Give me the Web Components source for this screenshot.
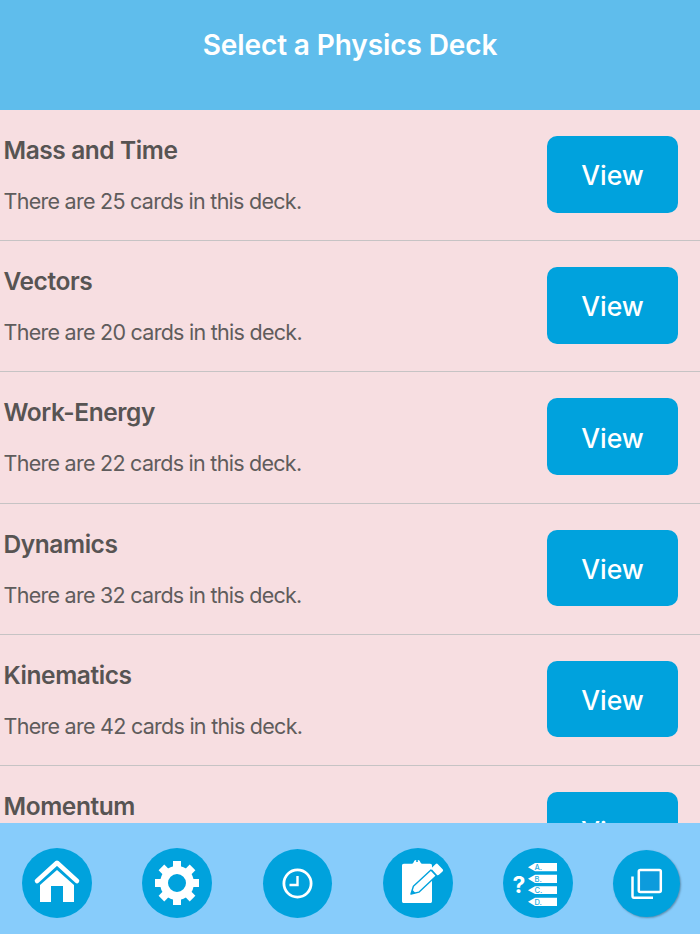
<!DOCTYPE html>
<html lang="en">
<head>
<meta charset="utf-8">
<title>Select a Physics Deck</title>
<style>
    html, body {
        margin: 0;
        height: 100%;
        font-family: Inter, "Liberation Sans", sans-serif;
    }
</style>
</head>
<body>
<deck-app>
    <app-header slot="header">Select a Physics Deck</app-header>
    <deck-row name="Mass and Time" count="25"></deck-row>
    <deck-row name="Vectors" count="20"></deck-row>
    <deck-row name="Work-Energy" count="22"></deck-row>
    <deck-row name="Dynamics" count="32"></deck-row>
    <deck-row name="Kinematics" count="42"></deck-row>
    <deck-row name="Momentum" count="18"></deck-row>
    <nav-bar slot="footer">
        <nav-button label="Home">
            <svg viewBox="0 0 70 70" width="70" height="70">
                <path d="M15 33 35 14.800 55 33" fill="none" stroke="#fff" stroke-width="4.600" stroke-linecap="round" stroke-linejoin="round"/>
                <path d="M18 37 35 22 52 37V54H41V38H29V54H18Z" fill="#fff"/>
            </svg>
        </nav-button>
        <nav-button label="Settings">
            <svg viewBox="0 0 70 70" width="70" height="70">
                <circle cx="35" cy="35" r="13" fill="none" stroke="#fff" stroke-width="8"/>
                <g fill="#fff">
                    <rect x="31" y="13" width="8" height="8"/>
                    <rect x="31" y="13" width="8" height="8" transform="rotate(45 35 35)"/>
                    <rect x="31" y="13" width="8" height="8" transform="rotate(90 35 35)"/>
                    <rect x="31" y="13" width="8" height="8" transform="rotate(135 35 35)"/>
                    <rect x="31" y="13" width="8" height="8" transform="rotate(180 35 35)"/>
                    <rect x="31" y="13" width="8" height="8" transform="rotate(225 35 35)"/>
                    <rect x="31" y="13" width="8" height="8" transform="rotate(270 35 35)"/>
                    <rect x="31" y="13" width="8" height="8" transform="rotate(315 35 35)"/>
                </g>
            </svg>
        </nav-button>
        <nav-button label="History" size="69">
            <svg viewBox="0 0 69 69" width="69" height="69">
                <circle cx="34.500" cy="34.500" r="13.600" fill="none" stroke="#fff" stroke-width="2.800"/>
                <path d="M34.500 27V36H26.500" fill="none" stroke="#fff" stroke-width="2.400"/>
            </svg>
        </nav-button>
        <nav-button label="Notes">
            <svg viewBox="0 0 70 70" width="70" height="70">
                <path d="M21 15.700H29C30 15.700 30.500 14.500 31 13.500 31.500 11.600 36.500 11.600 37 13.500 37.500 14.500 38 15.700 39 15.700H47C48.500 15.700 49 16.500 49 18V53C49 54.500 48.500 55 47 55H21C19.500 55 19 54.500 19 53V18C19 16.500 19.500 15.700 21 15.700Z" fill="#fff"/>
                <circle cx="34" cy="13" r="1.100" fill="#00a2dd"/>
                <g transform="translate(28 46) rotate(-43)">
                    <path d="M0 0 7 -4H31V4H7Z" fill="#fff" stroke="#00a2dd" stroke-width="1.400" stroke-linejoin="round"/>
                    <path d="M0 0 4 -2.200V2.200Z" fill="#00a2dd"/>
                    <rect x="32" y="-5" width="8" height="10" rx="1.500" fill="#fff"/>
                </g>
            </svg>
        </nav-button>
        <nav-button label="Quiz">
            <svg viewBox="0 0 70 70" width="70" height="70" font-family="Inter, 'Liberation Sans', sans-serif">
                <text x="16" y="45" font-size="23" font-weight="700" fill="#fff" text-anchor="middle">?</text>
                <g fill="#fff">
                    <path d="M25 19.200 32 15H54V23.300H32Z"/>
                    <path d="M25 30.800 32 26.700H54V35H32Z"/>
                    <path d="M25 42.200 32 38.300H54V46H32Z"/>
                    <path d="M25 53.800 32 49.700H54V58H32Z"/>
                </g>
                <g fill="#25ade2" font-size="7.500" font-weight="500">
                    <text x="31.500" y="22.300">A.</text>
                    <text x="31.500" y="33.900">B.</text>
                    <text x="31.500" y="45.300">C.</text>
                    <text x="31.500" y="56.900">D.</text>
                </g>
            </svg>
        </nav-button>
        <nav-button label="Decks" size="67" shadow>
            <svg viewBox="0 0 67 67" width="67" height="67">
                <rect x="25.800" y="20" width="22" height="22" rx="1.500" fill="#0d9bdc" stroke="#fff" stroke-width="2.500"/>
                <path d="M19.500 26.500V46C19.500 47 20 47.800 21 47.800H40" fill="none" stroke="#fff" stroke-width="2.500"/>
            </svg>
        </nav-button>
    </nav-bar>
</deck-app>

<script>
class DeckApp extends HTMLElement {
    constructor() {
        super();
        this.attachShadow({ mode: "open" }).innerHTML = `
        <style>
            :host {
                display: flex;
                flex-direction: column;
                height: 100vh;
                overflow: hidden;
                background: #f7dee1;
            }
            .list {
                flex: 1;
                min-height: 0;
                overflow: hidden;
            }
        </style>
        <slot name="header"></slot>
        <div class="list"><slot></slot></div>
        <slot name="footer"></slot>
        `;
    }
}

class AppHeader extends HTMLElement {
    constructor() {
        super();
        this.attachShadow({ mode: "open" }).innerHTML = `
        <style>
            :host {
                display: block;
                height: 110px;
                padding-top: 27px;
                box-sizing: border-box;
                background: #5fbdec;
                color: #fff;
                font-size: 28px;
                font-weight: 600;
                line-height: 36px;
                letter-spacing: -0.1px;
                text-align: center;
            }
        </style>
        <slot></slot>
        `;
    }
}

class DeckRow extends HTMLElement {
    constructor() {
        super();
        this.attachShadow({ mode: "open" });
    }

    connectedCallback() {
        this.shadowRoot.innerHTML = `
        <style>
            :host {
                display: flex;
                justify-content: space-between;
                height: 131.2px;
                box-sizing: border-box;
                padding: 26px 22px 0 3.5px;
                border-bottom: 1px solid #c6c3c4;
                color: #575453;
            }
            h3 {
                margin: 0 0 23px;
                font-size: 24.5px;
                font-weight: 600;
                line-height: 28px;
                letter-spacing: -0.42px;
            }
            p {
                margin: 0;
                font-size: 21.5px;
                font-weight: 400;
                line-height: 28px;
                letter-spacing: -0.73px;
                color: #5f5c5c;
            }
            button {
                width: 131px;
                height: 76.6px;
                padding: 2px 0 0;
                border: 0;
                border-radius: 10px;
                background: #00a2dd;
                color: #fff;
                font: 500 26.5px Inter, "Liberation Sans", sans-serif;
            }
        </style>
        <div class="text">
            <h3>${this.getAttribute("name")}</h3>
            <p>There are ${this.getAttribute("count")} cards in this deck.</p>
        </div>
        <button type="button">View</button>
        `;
    }
}

class NavBar extends HTMLElement {
    constructor() {
        super();
        this.attachShadow({ mode: "open" }).innerHTML = `
        <style>
            :host {
                display: flex;
                flex: none;
                align-items: center;
                gap: 50.2px;
                height: 111px;
                box-sizing: border-box;
                padding: 9px 0 0 22px;
                background: #87ccfb;
            }
            ::slotted(:last-child) {
                margin-left: -11px;
            }
        </style>
        <slot></slot>
        `;
    }
}

class NavButton extends HTMLElement {
    constructor() {
        super();
        this.attachShadow({ mode: "open" });
    }

    connectedCallback() {
        const size = this.getAttribute("size") || 70;
        const shadow = this.hasAttribute("shadow") ? "1px 1px 2px rgba(0, 0, 0, 0.3)" : "none";
        this.setAttribute("role", "button");
        this.setAttribute("aria-label", this.getAttribute("label"));
        this.shadowRoot.innerHTML = `
        <style>
            :host {
                display: block;
                width: 70px;
                flex: none;
            }
            .disc {
                display: block;
                width: ${size}px;
                height: ${size}px;
                margin: auto;
                border-radius: 50%;
                background: #00a2dd;
                box-shadow: ${shadow};
                line-height: 0;
            }
        </style>
        <div class="disc"><slot></slot></div>
        `;
    }
}

customElements.define("deck-app", DeckApp);
customElements.define("app-header", AppHeader);
customElements.define("deck-row", DeckRow);
customElements.define("nav-bar", NavBar);
customElements.define("nav-button", NavButton);
</script>
</body>
</html>
